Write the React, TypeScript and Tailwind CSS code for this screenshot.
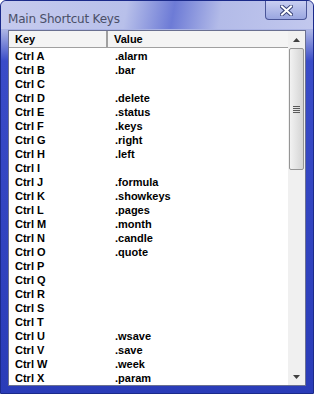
import React from "react";

const rows: [string, string][] = [
  ["Ctrl A", ".alarm"],
  ["Ctrl B", ".bar"],
  ["Ctrl C", ""],
  ["Ctrl D", ".delete"],
  ["Ctrl E", ".status"],
  ["Ctrl F", ".keys"],
  ["Ctrl G", ".right"],
  ["Ctrl H", ".left"],
  ["Ctrl I", ""],
  ["Ctrl J", ".formula"],
  ["Ctrl K", ".showkeys"],
  ["Ctrl L", ".pages"],
  ["Ctrl M", ".month"],
  ["Ctrl N", ".candle"],
  ["Ctrl O", ".quote"],
  ["Ctrl P", ""],
  ["Ctrl Q", ""],
  ["Ctrl R", ""],
  ["Ctrl S", ""],
  ["Ctrl T", ""],
  ["Ctrl U", ".wsave"],
  ["Ctrl V", ".save"],
  ["Ctrl W", ".week"],
  ["Ctrl X", ".param"],
];

const App = () => {
  return (
    <div className="w-[314px] h-[394px] flex flex-col rounded-t-[6px] border border-[#1b2a8a] bg-[linear-gradient(180deg,#c3c9ee_0%,#a9b2e4_30px,#3a4cc8_60px,#2a3cb8_100%)] font-['Liberation_Sans',sans-serif]">
      <div className="h-[28px] flex items-start justify-between shrink-0 bg-[linear-gradient(100deg,#c6cbee_0%,#b8c0ea_40%,#6d7bd6_55%,#b3bbe8_70%,#c2c8ee_100%)] rounded-t-[6px]">
        <span className="mt-[9px] ml-[7px] text-[12px] text-[#4a4f68] font-['DejaVu_Sans',sans-serif] tracking-[-0.2px]">
          Main Shortcut Keys
        </span>
        <div className="mr-[6px] w-[42px] h-[19px] rounded-b-[4px] border border-t-0 border-[#4a5598] bg-[linear-gradient(180deg,#c9cff2,#9aa6e0)] flex items-center justify-center">
          <svg width="13" height="11" viewBox="0 0 13 11">
            <path d="M2 1.5 L11 9.5 M11 1.5 L2 9.5" stroke="#3a4478" strokeWidth="4" strokeLinecap="square" />
            <path d="M2 1.5 L11 9.5 M11 1.5 L2 9.5" stroke="#ffffff" strokeWidth="2" strokeLinecap="square" />
          </svg>
        </div>
      </div>
      <div className="flex-1 mx-[7px] mb-[7px] mt-[1px] flex bg-white border border-[#6a7090] min-h-0">
        <div className="flex-1 flex flex-col min-w-0">
          <div className="h-[17px] flex shrink-0 bg-[#f4f4f4] border-b border-[#a0a0a0] text-[11px] font-bold text-black">
            <div className="w-[99px] pl-[6px] border-r-2 border-r-[#a0a0a0] flex items-center">Key</div>
            <div className="flex-1 pl-[6px] flex items-center">Value</div>
          </div>
          <div className="flex flex-col pt-[1px]">
            {rows.map(([k, v]) => (
              <div key={k} className="h-[14px] flex items-center text-[11px] font-bold text-black leading-none">
                <div className="w-[99px] pl-[6px]">{k}</div>
                <div className="pl-[7px]">{v}</div>
              </div>
            ))}
          </div>
        </div>
        <div className="w-[17px] flex flex-col bg-[#f0f0f0] shrink-0">
          <div className="h-[17px] flex items-center justify-center">
            <svg width="7" height="4" viewBox="0 0 7 4">
              <path d="M3.5 0 L7 4 L0 4 Z" fill="#404040" />
            </svg>
          </div>
          <div className="h-[122px] mx-[1px] rounded-[2px] border border-[#959595] bg-[linear-gradient(90deg,#f2f2f2,#e3e3e3_50%,#d4d4d4)] flex items-center justify-center">
            <div className="flex flex-col gap-[1px]">
              <div className="w-[7px] h-[1px] bg-[#5a5a5a]" />
              <div className="w-[7px] h-[1px] bg-[#5a5a5a]" />
              <div className="w-[7px] h-[1px] bg-[#5a5a5a]" />
              <div className="w-[7px] h-[1px] bg-[#5a5a5a]" />
            </div>
          </div>
          <div className="flex-1" />
          <div className="h-[17px] flex items-center justify-center">
            <svg width="7" height="4" viewBox="0 0 7 4">
              <path d="M0 0 L7 0 L3.5 4 Z" fill="#404040" />
            </svg>
          </div>
        </div>
      </div>
    </div>
  );
};

export default App;
